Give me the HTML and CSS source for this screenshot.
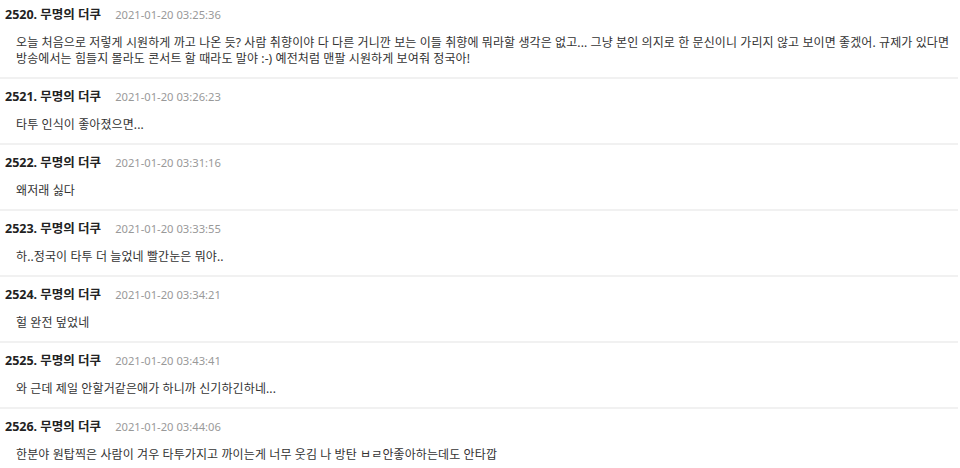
FILE: index.html
```html
<!DOCTYPE html>
<html lang="ko">
<head>
<meta charset="utf-8">
<link rel="stylesheet" href="styles.css">
</head>
<body>
<div class="list">
  <div class="item">
    <div class="head"><span class="name">2520. 무명의 더쿠</span><span class="date">2021-01-20 03:25:36</span></div>
    <div class="body">오늘 처음으로 저렇게 시원하게 까고 나온 듯? 사람 취향이야 다 다른 거니깐 보는 이들 취향에 뭐라할 생각은 없고... 그냥 본인 의지로 한 문신이니 가리지 않고 보이면 좋겠어. 규제가 있다면 방송에서는 힘들지 몰라도 콘서트 할 때라도 말야 :-) 예전처럼 맨팔 시원하게 보여줘 정국아!</div>
  </div>
  <div class="item">
    <div class="head"><span class="name">2521. 무명의 더쿠</span><span class="date">2021-01-20 03:26:23</span></div>
    <div class="body">타투 인식이 좋아졌으면...</div>
  </div>
  <div class="item">
    <div class="head"><span class="name">2522. 무명의 더쿠</span><span class="date">2021-01-20 03:31:16</span></div>
    <div class="body">왜저래 싫다</div>
  </div>
  <div class="item">
    <div class="head"><span class="name">2523. 무명의 더쿠</span><span class="date">2021-01-20 03:33:55</span></div>
    <div class="body">하..정국이 타투 더 늘었네 빨간눈은 뭐야..</div>
  </div>
  <div class="item">
    <div class="head"><span class="name">2524. 무명의 더쿠</span><span class="date">2021-01-20 03:34:21</span></div>
    <div class="body">헐 완전 덮었네</div>
  </div>
  <div class="item">
    <div class="head"><span class="name">2525. 무명의 더쿠</span><span class="date">2021-01-20 03:43:41</span></div>
    <div class="body">와 근데 제일 안할거같은애가 하니까 신기하긴하네...</div>
  </div>
  <div class="item">
    <div class="head"><span class="name">2526. 무명의 더쿠</span><span class="date">2021-01-20 03:44:06</span></div>
    <div class="body">한분야 원탑찍은 사람이 겨우 타투가지고 까이는게 너무 웃김 나 방탄 ㅂㄹ안좋아하는데도 안타깝</div>
  </div>
</div>
</body>
</html>
```

FILE: styles.css
```css
html, body {
  margin: 0;
  padding: 0;
  background: #fff;
}
body {
  font-family: "Noto Sans", "Noto Sans CJK KR", sans-serif;
  color: #333;
  overflow: hidden;
}
.list {
  width: 958px;
}
.item {
  border-bottom: 2px solid #f1f1f1;
  padding: 8px 0 10px 0;
}
.item:first-child {
  padding-top: 5px;
}
.head {
  display: flex;
  align-items: baseline;
  gap: 14px;
  padding-left: 5px;
  height: 19px;
  line-height: 19px;
}
.name {
  font-weight: 700;
  font-size: 12.5px;
  color: #222;
}
.date {
  font-size: 11.2px;
  color: #999;
}
.body {
  margin-top: 11px;
  padding-left: 16px;
  font-size: 12px;
  line-height: 16px;
  letter-spacing: 0.1px;
  color: #333;
}
```
